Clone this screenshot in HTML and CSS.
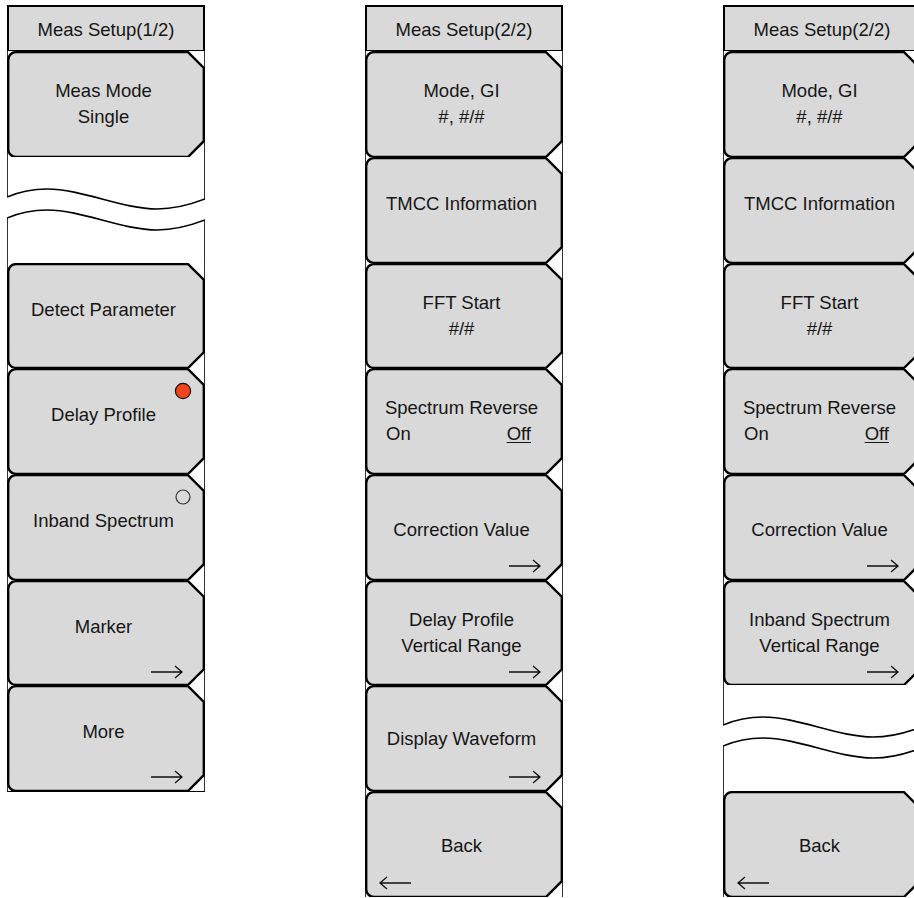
FILE: index.html
```html
<!DOCTYPE html>
<html>
<head>
<meta charset="utf-8">
<title>Meas Setup</title>
<link rel="stylesheet" href="styles.css">
</head>
<body>
<svg class="defs" width="0" height="0" aria-hidden="true">
  <defs>
    <g id="btn">
      <path d="M0.5,0V106M197.5,0V106" stroke="#333" stroke-width="1" fill="none"/>
      <path d="M9,1.1H181L196.8,16.9V90.2L181,106H9A7.8,7.8 0 0 1 1.2,98.2V8.9A7.8,7.8 0 0 1 9,1.1Z" fill="#d9d9d9" stroke="#000" stroke-width="2.4" stroke-linejoin="miter"/>
    </g>
    <g id="wave">
      <path d="M0.5,0V40M0.5,61V106M197.5,0V43M197.5,64V106" stroke="#333" stroke-width="1" fill="none"/>
      <path d="M0,40C12,35 24,32 40,32C75,32 115,52 150,52C170,52 185,47 198,42" stroke="#000" stroke-width="1.6" fill="none"/>
      <path d="M0,61C12,56 24,53 40,53C75,53 115,73 150,73C170,73 185,68 198,63" stroke="#000" stroke-width="1.6" fill="none"/>
    </g>
    <g id="arr-r">
      <path d="M0,7H31M24,1L31,7L24,13" stroke="#111" stroke-width="1.3" fill="none"/>
    </g>
    <g id="arr-l">
      <path d="M1,7H32M8,1L1,7L8,13" stroke="#111" stroke-width="1.3" fill="none"/>
    </g>
  </defs>
</svg>

<div class="page">
  <!-- Column 1 -->
  <div class="panel closed">
    <div class="title">Meas Setup(1/2)</div>
    <div class="key">
      <svg class="bg" viewBox="0 0 198 106" preserveAspectRatio="none"><use href="#btn"/></svg>
      <div class="label two"><div>Meas Mode</div><div>Single</div></div>
    </div>
    <div class="key">
      <svg class="bg" viewBox="0 0 198 106" preserveAspectRatio="none"><use href="#wave"/></svg>
    </div>
    <div class="key short">
      <svg class="bg" viewBox="0 0 198 106" preserveAspectRatio="none"><use href="#btn"/></svg>
      <div class="label one">Detect Parameter</div>
    </div>
    <div class="key">
      <svg class="bg" viewBox="0 0 198 106" preserveAspectRatio="none"><use href="#btn"/></svg>
      <div class="label one">Delay Profile</div>
      <svg class="radio" viewBox="0 0 18 18"><circle cx="9" cy="9" r="7.6" fill="#f2431d" stroke="#111" stroke-width="1.2"/></svg>
    </div>
    <div class="key">
      <svg class="bg" viewBox="0 0 198 106" preserveAspectRatio="none"><use href="#btn"/></svg>
      <div class="label one">Inband Spectrum</div>
      <svg class="radio" viewBox="0 0 18 18"><circle cx="9" cy="9" r="7" fill="none" stroke="#333" stroke-width="1.2"/></svg>
    </div>
    <div class="key short">
      <svg class="bg" viewBox="0 0 198 106" preserveAspectRatio="none"><use href="#btn"/></svg>
      <div class="label one">Marker</div>
      <svg class="arrow right" viewBox="0 0 32 14"><use href="#arr-r"/></svg>
    </div>
    <div class="key">
      <svg class="bg" viewBox="0 0 198 106" preserveAspectRatio="none"><use href="#btn"/></svg>
      <div class="label one">More</div>
      <svg class="arrow right" viewBox="0 0 32 14"><use href="#arr-r"/></svg>
    </div>
  </div>

  <!-- Column 2 -->
  <div class="panel">
    <div class="title">Meas Setup(2/2)</div>
    <div class="key">
      <svg class="bg" viewBox="0 0 198 106" preserveAspectRatio="none"><use href="#btn"/></svg>
      <div class="label two"><div>Mode, GI</div><div>#, #/#</div></div>
    </div>
    <div class="key">
      <svg class="bg" viewBox="0 0 198 106" preserveAspectRatio="none"><use href="#btn"/></svg>
      <div class="label one">TMCC Information</div>
    </div>
    <div class="key short">
      <svg class="bg" viewBox="0 0 198 106" preserveAspectRatio="none"><use href="#btn"/></svg>
      <div class="label two"><div>FFT Start</div><div>#/#</div></div>
    </div>
    <div class="key">
      <svg class="bg" viewBox="0 0 198 106" preserveAspectRatio="none"><use href="#btn"/></svg>
      <div class="label two"><div>Spectrum Reverse</div><div class="opts"><span>On</span><span class="sel">Off</span></div></div>
    </div>
    <div class="key">
      <svg class="bg" viewBox="0 0 198 106" preserveAspectRatio="none"><use href="#btn"/></svg>
      <div class="label low">Correction Value</div>
      <svg class="arrow right" viewBox="0 0 32 14"><use href="#arr-r"/></svg>
    </div>
    <div class="key short">
      <svg class="bg" viewBox="0 0 198 106" preserveAspectRatio="none"><use href="#btn"/></svg>
      <div class="label two"><div>Delay Profile</div><div>Vertical Range</div></div>
      <svg class="arrow right" viewBox="0 0 32 14"><use href="#arr-r"/></svg>
    </div>
    <div class="key">
      <svg class="bg" viewBox="0 0 198 106" preserveAspectRatio="none"><use href="#btn"/></svg>
      <div class="label mid">Display Waveform</div>
      <svg class="arrow right" viewBox="0 0 32 14"><use href="#arr-r"/></svg>
    </div>
    <div class="key">
      <svg class="bg" viewBox="0 0 198 106" preserveAspectRatio="none"><use href="#btn"/></svg>
      <div class="label back">Back</div>
      <svg class="arrow left" viewBox="0 0 32 14"><use href="#arr-l"/></svg>
    </div>
  </div>

  <!-- Column 3 -->
  <div class="panel">
    <div class="title">Meas Setup(2/2)</div>
    <div class="key">
      <svg class="bg" viewBox="0 0 198 106" preserveAspectRatio="none"><use href="#btn"/></svg>
      <div class="label two"><div>Mode, GI</div><div>#, #/#</div></div>
    </div>
    <div class="key">
      <svg class="bg" viewBox="0 0 198 106" preserveAspectRatio="none"><use href="#btn"/></svg>
      <div class="label one">TMCC Information</div>
    </div>
    <div class="key short">
      <svg class="bg" viewBox="0 0 198 106" preserveAspectRatio="none"><use href="#btn"/></svg>
      <div class="label two"><div>FFT Start</div><div>#/#</div></div>
    </div>
    <div class="key">
      <svg class="bg" viewBox="0 0 198 106" preserveAspectRatio="none"><use href="#btn"/></svg>
      <div class="label two"><div>Spectrum Reverse</div><div class="opts"><span>On</span><span class="sel">Off</span></div></div>
    </div>
    <div class="key">
      <svg class="bg" viewBox="0 0 198 106" preserveAspectRatio="none"><use href="#btn"/></svg>
      <div class="label low">Correction Value</div>
      <svg class="arrow right" viewBox="0 0 32 14"><use href="#arr-r"/></svg>
    </div>
    <div class="key short">
      <svg class="bg" viewBox="0 0 198 106" preserveAspectRatio="none"><use href="#btn"/></svg>
      <div class="label two"><div>Inband Spectrum</div><div>Vertical Range</div></div>
      <svg class="arrow right" viewBox="0 0 32 14"><use href="#arr-r"/></svg>
    </div>
    <div class="key">
      <svg class="bg" viewBox="0 0 198 106" preserveAspectRatio="none"><use href="#wave"/></svg>
    </div>
    <div class="key">
      <svg class="bg" viewBox="0 0 198 106" preserveAspectRatio="none"><use href="#btn"/></svg>
      <div class="label back">Back</div>
      <svg class="arrow left" viewBox="0 0 32 14"><use href="#arr-l"/></svg>
    </div>
  </div>
</div>
</body>
</html>
```

FILE: styles.css
```css
html, body {
  margin: 0;
  padding: 0;
  overflow: hidden;
  background: #fff;
}

body {
  font-family: "Liberation Sans", Arial, sans-serif;
  color: #161616;
}

.defs {
  position: absolute;
  width: 0;
  height: 0;
  overflow: hidden;
}

.page {
  display: flex;
  align-items: flex-start;
  gap: 160px;
  padding: 5px 0 0 7px;
}

.panel {
  width: 198px;
  flex: none;
  display: flex;
  flex-direction: column;
}

.panel.closed {
  border-bottom: 1px solid #000;
}

.title {
  height: 46px;
  box-sizing: border-box;
  border: 2px solid #000;
  border-bottom-width: 1px;
  background: #d9d9d9;
  font-size: 18.5px;
  line-height: 36px;
  padding-top: 5px;
  text-align: center;
  white-space: nowrap;
}

.key {
  position: relative;
  height: 106px;
  flex: none;
}

.key.short {
  height: 105px;
}

.bg {
  position: absolute;
  left: 0;
  top: 0;
  width: 198px;
  height: 100%;
  display: block;
}

.label {
  position: relative;
  font-size: 18.5px;
  line-height: 26px;
  text-align: center;
  white-space: nowrap;
  padding: 27px 5px 0 0;
}

.label.one { padding-top: 34px; }
.label.mid { padding-top: 41px; }
.label.back { padding-top: 42px; }
.label.low { padding-top: 43px; }

.opts {
  display: flex;
  justify-content: space-between;
  padding: 0 27px 0 21px;
}

.sel {
  text-decoration: underline;
  text-underline-offset: 2px;
}

.radio {
  position: absolute;
  left: 167px;
  top: 14px;
  width: 18px;
  height: 18px;
}

.arrow {
  position: absolute;
  top: 85px;
  width: 32px;
  height: 14px;
}

.arrow.right { left: 144px; }
.arrow.left { left: 14px; }
```
